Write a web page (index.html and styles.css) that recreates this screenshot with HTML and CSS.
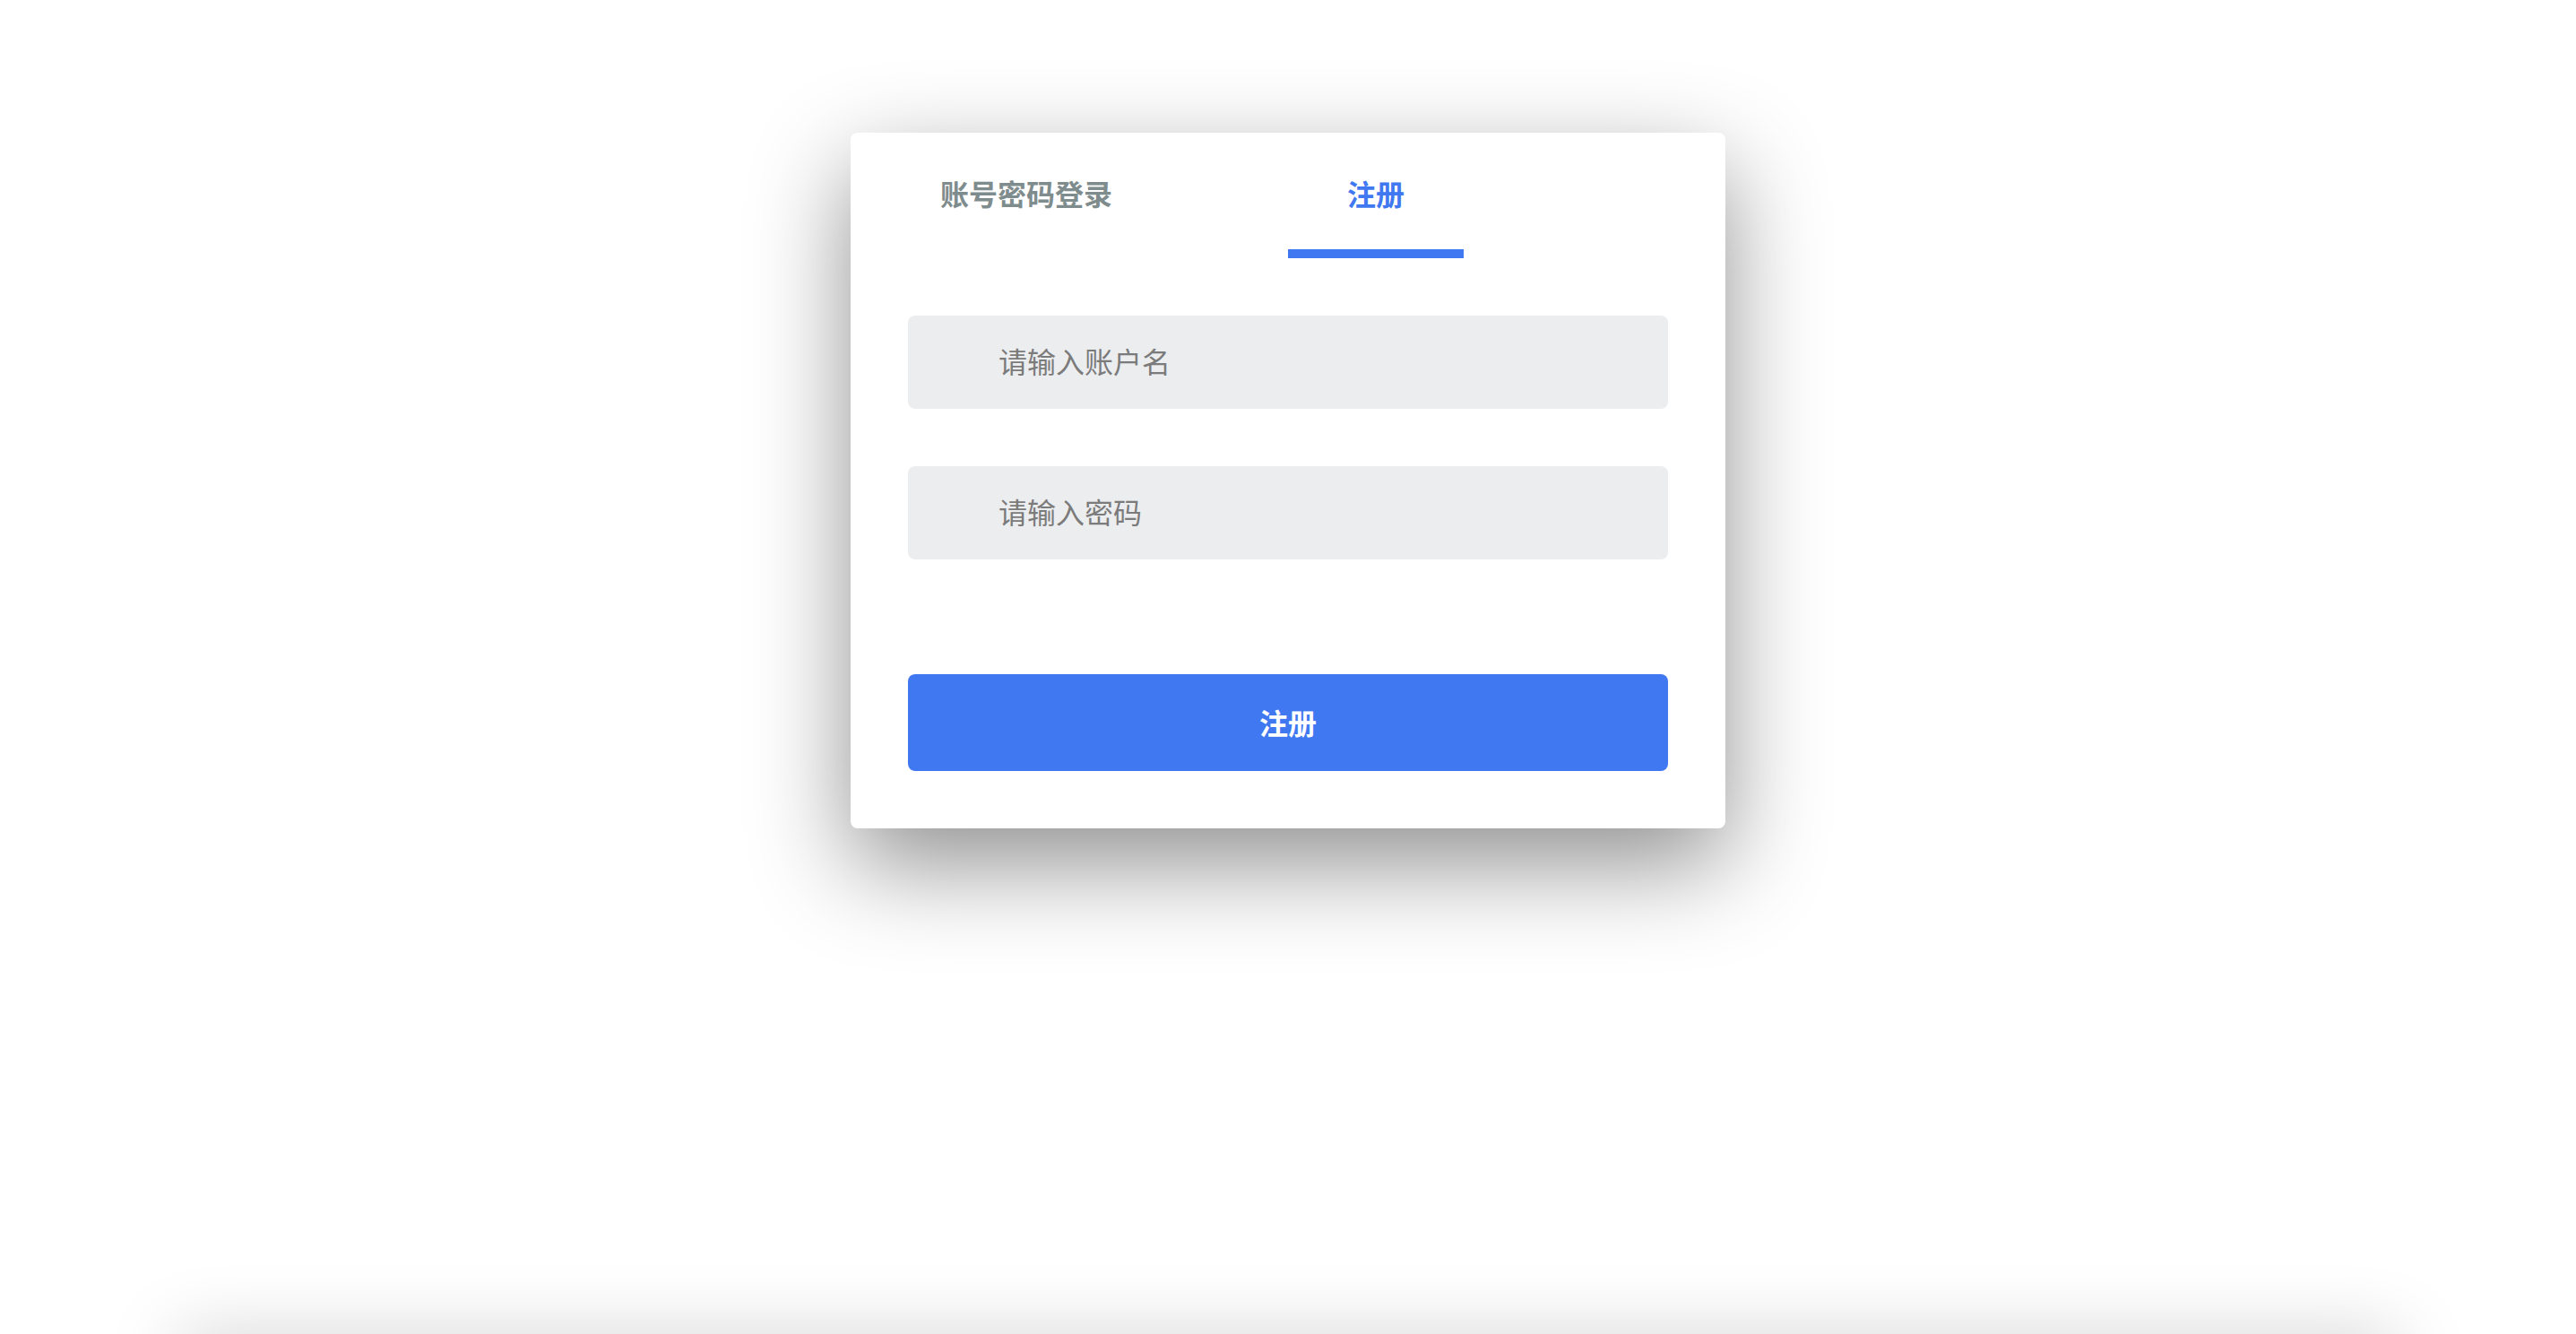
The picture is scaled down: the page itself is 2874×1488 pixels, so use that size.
FILE: index.html
```html
<!DOCTYPE html>
<html lang="zh-CN">
<head>
  <meta charset="UTF-8">
  <title>注册</title>
  <link rel="stylesheet" href="styles.css">
</head>
<body>

  <div class="login-card">
    <div class="tabs">
      <div class="tab tab-login">账号密码登录</div>
      <div class="tab tab-register active">注册</div>
    </div>
    <form id="registerForm" class="form">
      <input type="text" class="field" placeholder="请输入账户名">
      <input type="password" class="field" placeholder="请输入密码">
      <button type="submit" class="submit">注册</button>
    </form>
  </div>

  <div class="page-footer"></div>

</body>
</html>
```

FILE: styles.css
```css
* {
  margin: 0;
  padding: 0;
  box-sizing: border-box;
  font-family: 'Noto Sans CJK SC', 'Noto Sans', sans-serif;
}

html, body {
  height: 100%;
  overflow: hidden;
}

body {
  background: #fff;
}

.login-card {
  width: 976px;
  margin: 148px auto 0;
  padding: 0 64px 64px;
  background: #fff;
  border-radius: 8px;
  box-shadow: 0 40px 110px rgba(0, 0, 0, 0.44);
}

/* Tabs */
.tabs {
  display: flex;
  margin: 0 -64px;
}

.tab {
  font-size: 32px;
  line-height: 32px;
  font-weight: 700;
  color: #7f8c8d;
  padding: 51px 0 47px;
  border-bottom: 10px solid transparent;
  cursor: pointer;
}

.tab-login {
  width: 488px;
  padding-left: 100px;
}

.tab-register {
  width: 196px;
  text-align: center;
}

.tab.active {
  color: #3f78f0;
  border-bottom-color: #3f78f0;
}

/* Form */
.form {
  display: flex;
  flex-direction: column;
  padding-top: 64px;
}

.field {
  height: 104px;
  margin-bottom: 64px;
  padding: 0 20px 4px 101px;
  border: none;
  border-radius: 8px;
  background: #ecedef;
  font-size: 32px;
  color: #333;
  outline: none;
}

.field::placeholder {
  color: #7b7b7b;
}

.submit {
  height: 108px;
  margin-top: 64px;
  padding-bottom: 2px;
  border: none;
  border-radius: 8px;
  background: #3f78f0;
  color: #fff;
  font-size: 32px;
  font-weight: 700;
  cursor: pointer;
}

.page-footer {
  width: 2474px;
  height: 40px;
  margin: 571px auto 0;
  background: #fff;
  box-shadow: 0 0 80px rgba(0, 0, 0, 0.25);
}
```
